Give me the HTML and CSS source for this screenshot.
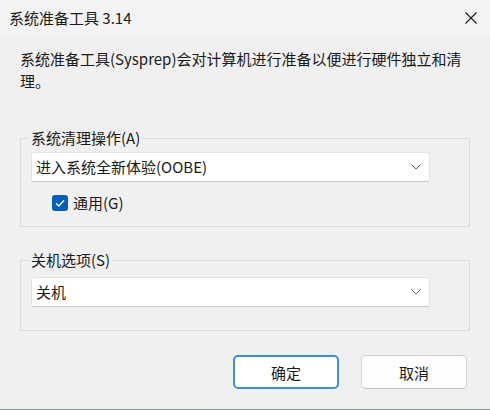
FILE: index.html
```html
<!DOCTYPE html>
<html lang="zh-CN">
<head>
    <meta charset="UTF-8">
    <title>系统准备工具 3.14</title>
    <link rel="stylesheet" href="styles.css">
</head>
<body>
    <div class="window">
        <div class="titlebar">
            <span class="title">系统准备工具 3.14</span>
            <svg class="close" width="12" height="12" viewBox="0 0 12 12">
                <path d="M0.5 0.5 L11.5 11.5 M11.5 0.5 L0.5 11.5" stroke="#1a1a1a" stroke-width="1.1" fill="none"/>
            </svg>
        </div>
        <div class="content">
            <p class="intro">系统准备工具(Sysprep)会对计算机进行准备以便进行硬件独立和清理。</p>

            <fieldset class="group">
                <legend>系统清理操作(A)</legend>
                <div class="select">
                    <span>进入系统全新体验(OOBE)</span>
                    <svg width="10" height="6" viewBox="0 0 10 6">
                        <path d="M0.5 0.5 L5 5 L9.5 0.5" stroke="#5f5f5f" stroke-width="1" fill="none"/>
                    </svg>
                </div>
                <label class="check">
                    <span class="box">
                        <svg width="10" height="8" viewBox="0 0 10 8">
                            <path d="M1 4.2 L3.8 7 L9 1.2" stroke="#fff" stroke-width="1.3" fill="none"/>
                        </svg>
                    </span>
                    通用(G)
                </label>
            </fieldset>

            <fieldset class="group second">
                <legend>关机选项(S)</legend>
                <div class="select">
                    <span>关机</span>
                    <svg width="10" height="6" viewBox="0 0 10 6">
                        <path d="M0.5 0.5 L5 5 L9.5 0.5" stroke="#5f5f5f" stroke-width="1" fill="none"/>
                    </svg>
                </div>
            </fieldset>

            <div class="actions">
                <button class="btn primary">确定</button>
                <button class="btn">取消</button>
            </div>
        </div>
    </div>
</body>
</html>
```

FILE: styles.css
```css
body {
    margin: 0;
    padding: 0;
    font-family: "Noto Sans CJK SC", "Noto Sans", sans-serif;
    font-size: 15px;
    color: #1a1a1a;
    background: #f0f0f0;
}
.window {
    width: 490px;
    height: 410px;
    box-sizing: border-box;
    background: #f0f0f0;
    border-bottom: 1px solid #9097a8;
    overflow: hidden;
}
.titlebar {
    height: 36px;
    background: #f3f3f3;
    display: flex;
    align-items: center;
    justify-content: space-between;
    padding: 0 13px 0 9px;
}
.title {
    font-size: 15px;
    line-height: 16px;
}
.close {
    display: block;
}
.content {
    padding: 12px 0 0 20px;
}
.intro {
    margin: 0;
    width: 447px;
    line-height: 22px;
}
.group {
    margin: 38px 0 0 0;
    width: 450px;
    box-sizing: border-box;
    border: 1px solid #dcdcdc;
    padding: 6px 10px 15px 10px;
}
.group legend {
    padding: 0 2px;
    margin-left: -2px;
    line-height: 16px;
}
.group.second {
    margin-top: 25px;
    padding-bottom: 23px;
    padding-top: 9px;
}
.select {
    width: 399px;
    height: 30px;
    box-sizing: border-box;
    background: #fff;
    border: 1px solid #e3e3e3;
    border-bottom-color: #c9c9c9;
    border-radius: 3px;
    display: flex;
    align-items: center;
    justify-content: space-between;
    padding: 0 8px 0 4px;
}
.select span {
    line-height: 16px;
}
.select svg {
    display: block;
}
.check {
    display: flex;
    align-items: center;
    gap: 5px;
    margin: 13px 0 0 21px;
    line-height: 16px;
}
.box {
    width: 16px;
    height: 16px;
    border-radius: 3px;
    background: #005fb8;
    display: flex;
    align-items: center;
    justify-content: center;
}
.box svg {
    display: block;
}
.actions {
    display: flex;
    justify-content: flex-end;
    gap: 22px;
    margin: 24px 23px 0 0;
}
.btn {
    width: 106px;
    height: 34px;
    box-sizing: border-box;
    background: #fdfdfd;
    border: 1px solid #d4d4d4;
    border-bottom-color: #c0c0c0;
    border-radius: 5px;
    font-family: inherit;
    font-size: 15px;
    color: #1a1a1a;
    padding: 0;
}
.btn.primary {
    background: #fff;
    border: 2px solid #3c8fe0;
}
```
